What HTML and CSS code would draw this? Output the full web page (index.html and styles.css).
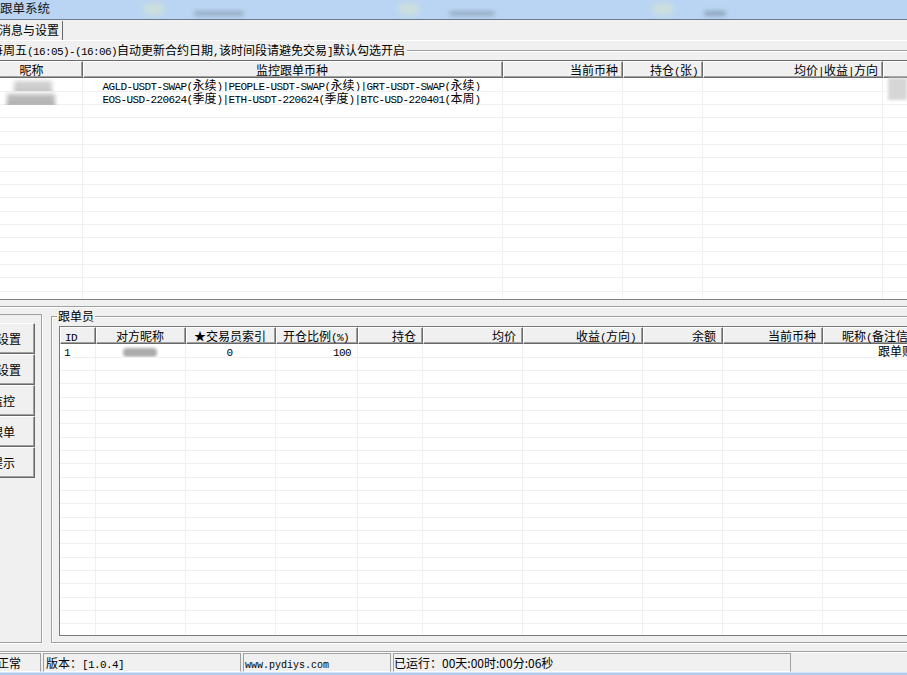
FILE: index.html
```html
<!DOCTYPE html>
<html lang="zh-CN">
<head>
<meta charset="utf-8">
<title>跟单系统</title>
<link rel="stylesheet" href="styles.css">
</head>
<body>
<div class="titlebar">
  <span class="title">跟单系统</span>
  <span class="tb-blur g1"></span>
  <span class="tb-blur d1"></span>
  <span class="tb-blur g2"></span>
  <span class="tb-blur d2"></span>
  <span class="tb-blur g3"></span>
  <span class="tb-blur d3"></span>
</div>
<div class="tabs"><div class="tab">消息与设置</div></div>
<div class="tabpanel">
  <div class="gbhead">
    <span class="gbtext">每周五<span class="m">(16:05)-(16:06)</span>自动更新合约日期<span class="m">,</span>该时间段请避免交易<span class="m">]</span>默认勾选开启</span>
    <span class="gbline"></span>
  </div>
  <div class="lv lv-top">
    <div class="col t1">
      <div class="hd ctr">昵称</div>
      <div class="bd">
        <div class="cell ctr"><span class="blur nick1"></span></div>
        <div class="cell ctr"><span class="blur nick2"></span></div>
      </div>
    </div>
    <div class="col t2">
      <div class="hd ctr">监控跟单币种</div>
      <div class="bd">
        <div class="cell ctr"><span class="m">AGLD-USDT-SWAP(</span>永续<span class="m">)|PEOPLE-USDT-SWAP(</span>永续<span class="m">)|GRT-USDT-SWAP(</span>永续<span class="m">)</span></div>
        <div class="cell ctr"><span class="m">EOS-USD-220624(</span>季度<span class="m">)|ETH-USDT-220624(</span>季度<span class="m">)|BTC-USD-220401(</span>本周<span class="m">)</span></div>
      </div>
    </div>
    <div class="col t3">
      <div class="hd rt">当前币种</div>
      <div class="bd"></div>
    </div>
    <div class="col t4">
      <div class="hd rt">持仓<span class="m">(</span>张<span class="m">)</span></div>
      <div class="bd"></div>
    </div>
    <div class="col t5">
      <div class="hd rt">均价<span class="m">|</span>收益<span class="m">|</span>方向</div>
      <div class="bd"></div>
    </div>
    <div class="col t6">
      <div class="hd rt">操作</div>
      <div class="bd">
        <div class="cell pl open"><span class="blur side"></span></div>
      </div>
    </div>
  </div>
</div>
<div class="splitter"></div>
<div class="lower">
  <div class="leftpanel">
    <div class="btn">参数设置</div>
    <div class="btn">账号设置</div>
    <div class="btn">总监控</div>
    <div class="btn">开跟单</div>
    <div class="btn">弹提示</div>
  </div>
  <div class="group">
    <div class="legend">跟单员</div>
    <div class="lv lv-bot">
      <div class="col b1">
        <div class="hd"><span class="m">ID</span></div>
        <div class="bd"><div class="cell pl"><span class="m">1</span></div></div>
      </div>
      <div class="col b2">
        <div class="hd ctr">对方昵称</div>
        <div class="bd"><div class="cell ctr"><span class="blur peer"></span></div></div>
      </div>
      <div class="col b3">
        <div class="hd ctr">★交易员索引</div>
        <div class="bd"><div class="cell ctr"><span class="m">0</span></div></div>
      </div>
      <div class="col b4">
        <div class="hd ctr">开仓比例<span class="m">(%)</span></div>
        <div class="bd"><div class="cell rt"><span class="m">100</span></div></div>
      </div>
      <div class="col b5">
        <div class="hd rt">持仓</div>
        <div class="bd"></div>
      </div>
      <div class="col b6">
        <div class="hd rt">均价</div>
        <div class="bd"></div>
      </div>
      <div class="col b7">
        <div class="hd rt">收益<span class="m">(</span>方向<span class="m">)</span></div>
        <div class="bd"></div>
      </div>
      <div class="col b8">
        <div class="hd rt">余额</div>
        <div class="bd"></div>
      </div>
      <div class="col b9">
        <div class="hd rt">当前币种</div>
        <div class="bd"></div>
      </div>
      <div class="col b10">
        <div class="hd rt">昵称<span class="m">(</span>备注信息<span class="m">)</span></div>
        <div class="bd"><div class="cell rt">跟单账号</div></div>
      </div>
    </div>
  </div>
</div>
<div class="status">
  <div class="sp s1">正常</div>
  <div class="sp s2">版本：<span class="m">[1.0.4]</span></div>
  <div class="sp s3"><span class="url">www.pydiys.com</span></div>
  <div class="sp s4">已运行：00天:00时:00分:06秒</div>
</div>
<div class="frame-bottom"></div>
</body>
</html>
```
FILE: styles.css
```css
* { box-sizing: border-box; margin: 0; padding: 0; }
html, body { width: 907px; height: 675px; overflow: hidden; background: #f0f0f0; }
body {
  font-family: "Noto Sans CJK SC", "Liberation Sans", sans-serif;
  font-size: 12px;
  line-height: 13px;
  color: #000;
  display: flex;
  flex-direction: column;
}
body > * { flex: none; }

.m { font-family: "Liberation Mono", monospace; font-size: 11px; letter-spacing: -0.6px; }

/* title bar */
.titlebar {
  height: 20px;
  background: #b9d5f3;
  border-bottom: 1px solid #6b7a8c;
  position: relative;
  overflow: hidden;
}
.title { display: block; position: relative; z-index: 1; font-size: 12.5px; line-height: 15px; color: #141414; }
.tb-blur { position: absolute; filter: blur(3px); border-radius: 4px; }
.g1 { left: 144px; top: 3px; width: 20px; height: 12px; background: rgba(214, 228, 206, 0.7); }
.d1 { left: 194px; top: 11px; width: 50px; height: 5px; background: rgba(110, 125, 145, 0.45); filter: blur(2px); }
.g2 { left: 399px; top: 3px; width: 20px; height: 12px; background: rgba(214, 228, 210, 0.7); }
.d2 { left: 449px; top: 11px; width: 46px; height: 5px; background: rgba(110, 125, 145, 0.45); filter: blur(2px); }
.g3 { left: 653px; top: 3px; width: 20px; height: 12px; background: rgba(214, 228, 210, 0.7); }
.d3 { left: 704px; top: 11px; width: 22px; height: 5px; background: rgba(100, 115, 135, 0.5); filter: blur(2px); }

/* tab */
.tabs { height: 20px; display: flex; align-items: flex-end; }
.tab {
  height: 19px;
  line-height: 17px;
  margin-left: -2px;
  padding: 0 3px 0 1px;
  border-right: 1px solid #696969;
  white-space: nowrap;
}
.tabpanel { border-top: 1px solid #fff; }

.gbhead { height: 19px; display: flex; align-items: center; }
.gbtext { display: block; margin-left: -9px; white-space: nowrap; line-height: 13px; flex: none; }
.gbline { flex: 1; height: 2px; margin-left: 2px; border-top: 1px solid #a0a0a0; border-bottom: 1px solid #fff; }

/* list views */
.lv { display: flex; overflow: hidden; }
.col { display: flex; flex-direction: column; flex: none; }
.hd {
  height: 17px;
  line-height: 15px;
  padding: 0 6px 0 4px;
  background: #f0f0f0;
  border-top: 1px solid #fff;
  border-left: 1px solid #fff;
  border-right: 1px solid #696969;
  border-bottom: 1px solid #696969;
  box-shadow: inset -1px -1px 0 #a0a0a0;
  white-space: nowrap;
  overflow: hidden;
}
.bd {
  flex: 1;
  border-right: 1px solid #f0f0f0;
  background: repeating-linear-gradient(#fff 0 13px, #f0f0f0 13px 14px, #fff 14px 26px, #f0f0f0 26px 27px, #fff 27px 39px, #f0f0f0 39px 40px);
}
.cell { height: 13.333px; line-height: 13px; white-space: nowrap; overflow: hidden; padding: 0 6px 0 4px; }
.cell.open { overflow: visible; }
.ctr { text-align: center; }
.rt { text-align: right; }
.pl { text-align: left; }

.lv-top {
  margin-left: -19px;
  height: 240px;
  border-top: 1px solid #696969;
  border-left: 1px solid #696969;
  border-bottom: 1px solid #808080;
}
.lv-top .hd.rt { padding-right: 4px; }
.t1 { width: 101px; }
.t2 { width: 420px; }
.t3 { width: 120px; }
.t4 { width: 80px; }
.t5 { width: 180px; }
.t6 { width: 140px; }
.t6 .hd { color: transparent; }

.blur { display: inline-block; vertical-align: middle; filter: blur(2px); }
.nick1 { width: 38px; height: 12px; margin-left: 4px; background: #cfcfcf; border-bottom: 2px dotted #777; }
.nick2 { width: 48px; height: 12px; background: #b9b9b9; border-bottom: 2px dotted #666; }
.side { width: 19px; height: 22px; background: #d6d6d6; margin-left: 1px; vertical-align: top; filter: blur(1.5px); }
.peer { width: 34px; height: 9px; background: #ababab; filter: blur(1.5px); border-radius: 4px; }

.splitter { margin-top: 6px; height: 2px; border-top: 1px solid #a0a0a0; border-bottom: 1px solid #fff; }

.lower { height: 343px; display: flex; align-items: flex-start; }
.leftpanel {
  flex: none;
  margin-left: -50px;
  margin-top: 6px;
  width: 92px;
  height: 329px;
  border: 1px solid #a0a0a0;
  box-shadow: 1px 1px 0 #fff;
  padding: 8px 0 0 8px;
}
.btn {
  width: 76px;
  height: 31px;
  line-height: 29px;
  text-align: center;
  white-space: nowrap;
  background: #f0f0f0;
  border-top: 1px solid #fff;
  border-left: 1px solid #fff;
  border-right: 1px solid #696969;
  border-bottom: 1px solid #696969;
  box-shadow: inset -1px -1px 0 #a0a0a0;
}

.group {
  flex: none;
  width: 900px;
  margin-left: 9px;
  margin-top: 8px;
  height: 327px;
  border-top: 1px solid #a0a0a0;
  border-left: 1px solid #a0a0a0;
  border-bottom: 1px solid #a0a0a0;
  box-shadow: inset 1px 1px 0 #fff, 0 1px 0 #fff;
}
.legend {
  width: max-content;
  margin: -8px 0 0 5px;
  padding: 0 1px;
  line-height: 13px;
  background: #f0f0f0;
}
.lv-bot {
  margin: 4px 0 0 7px;
  height: 310px;
  border: 1px solid #7a7a7a;
}
.b1 { width: 36px; }
.b2 { width: 90px; }
.b3 { width: 90px; }
.b4 { width: 82px; }
.b5 { width: 65px; }
.b6 { width: 100px; }
.b7 { width: 120px; }
.b8 { width: 80px; }
.b9 { width: 100px; }
.b10 { width: 110px; }
.lv-bot .cell.rt { padding-right: 6px; }

/* status bar */
.status {
  height: 21px;
  border-top: 1px solid #a0a0a0;
  box-shadow: inset 0 1px 0 #fff;
  padding-top: 1px;
  display: flex;
}
.sp {
  flex: none;
  height: 19px;
  line-height: 17px;
  border: 1px solid #a0a0a0;
  border-bottom-color: #fff;
  white-space: nowrap;
  overflow: hidden;
}
.s1 { margin-left: -10px; width: 51px; padding-left: 6px; }
.s2 { margin-left: 2px; width: 198px; padding-left: 2px; }
.s3 { margin-left: 2px; width: 148px; padding-left: 1px; }
.s4 { margin-left: 2px; width: 398px; padding-left: 0; }
.url { font-family: "Liberation Mono", monospace; font-size: 10px; }

.frame-bottom { height: 3px; background: #b1cdee; border-top: 1px solid #d3e4f7; }
```
